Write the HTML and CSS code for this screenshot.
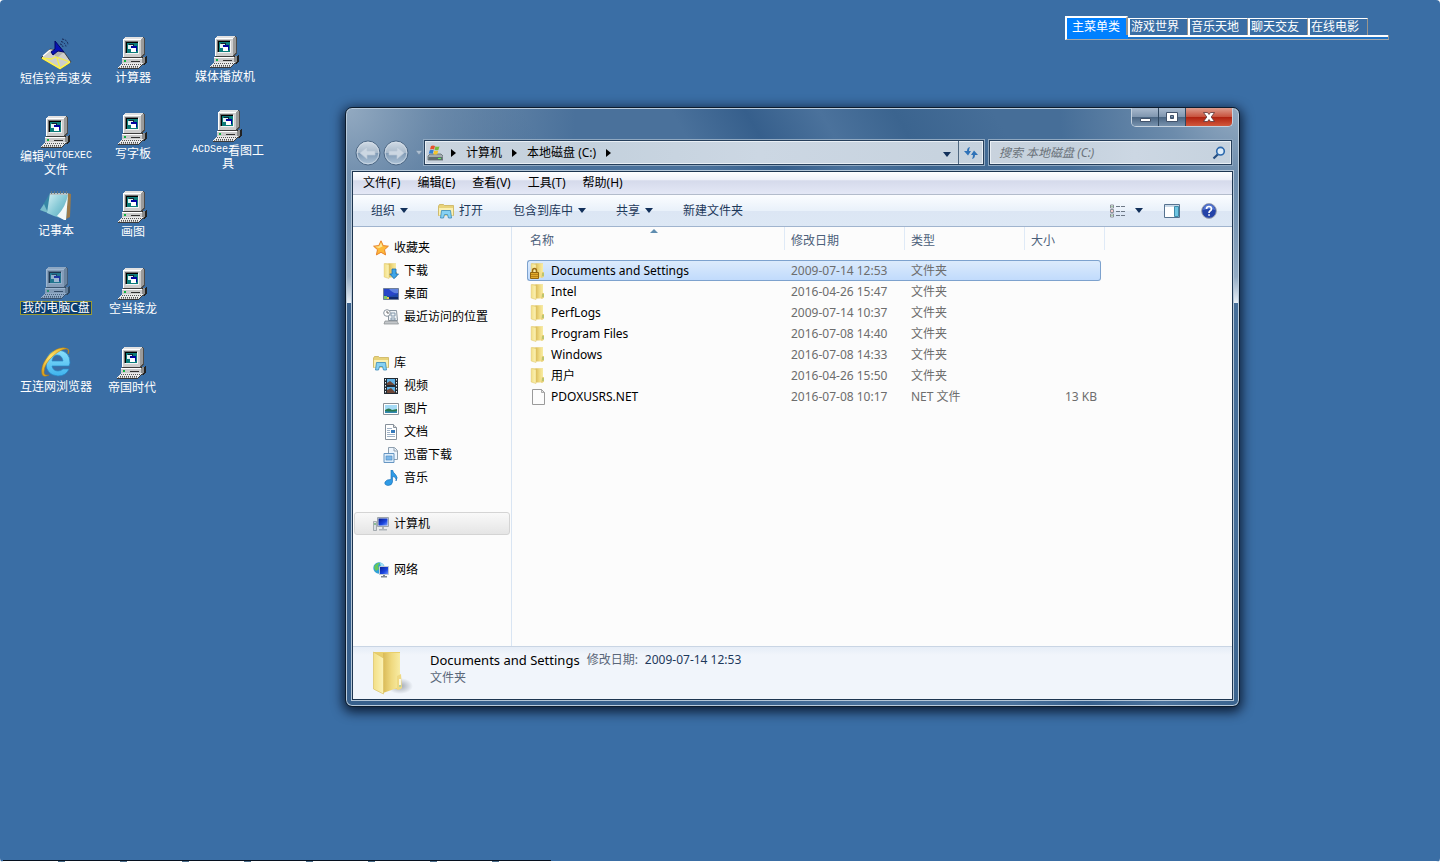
FILE: index.html
```html
<!DOCTYPE html>
<html lang="zh-CN">
<head>
<meta charset="utf-8">
<title>本地磁盘 (C:)</title>
<link rel="stylesheet" href="styles.css">
</head>
<body>
<svg class="defs" width="0" height="0" aria-hidden="true">
  <defs>
    <linearGradient id="gFold" x1="0" x2="1"><stop offset="0" stop-color="#d9ba58"/><stop offset=".5" stop-color="#efd97f"/><stop offset="1" stop-color="#f8ecA4"/></linearGradient>
    <linearGradient id="gFlap" x1="0" x2="1"><stop offset="0" stop-color="#f3df86"/><stop offset="1" stop-color="#fbf3b8"/></linearGradient>
    <radialGradient id="gShade"><stop offset="0" stop-color="#5d6673" stop-opacity=".55"/><stop offset="1" stop-color="#5d6673" stop-opacity="0"/></radialGradient>
    <linearGradient id="gOrb" x1="0" x2="0" y1="0" y2="1"><stop offset="0" stop-color="#d3dde7"/><stop offset=".48" stop-color="#a9bacb"/><stop offset=".5" stop-color="#809ab5"/><stop offset="1" stop-color="#afc4d8"/></linearGradient>
    <linearGradient id="gBlue" x1="0" x2="1" y1="0" y2="1"><stop offset="0" stop-color="#061a8c"/><stop offset=".6" stop-color="#1c46e0"/><stop offset="1" stop-color="#7fa2ff"/></linearGradient>
    <linearGradient id="gNote" x1="0" x2="1" y1="0" y2="1"><stop offset="0" stop-color="#d6f2f5"/><stop offset=".5" stop-color="#86c9d6"/><stop offset="1" stop-color="#4fa3b8"/></linearGradient>
    <linearGradient id="gIe" x1="0" x2="0" y1="0" y2="1"><stop offset="0" stop-color="#8be0fb"/><stop offset="1" stop-color="#3fb4ee"/></linearGradient>
    <linearGradient id="gGold" x1="0" x2="1" y1="1" y2="0"><stop offset="0" stop-color="#d99a12"/><stop offset=".5" stop-color="#ffe36a"/><stop offset="1" stop-color="#e0a518"/></linearGradient>
  </defs>
  <symbol id="pc" viewBox="0 0 32 32">
    <g shape-rendering="crispEdges">
      <path d="M8 0h19v1h1v17h-1v1h-1v1h-1v1H6V2h1V1h1z" fill="#4a4a4a"/>
      <path d="M8 0h18v1h1v16h-1v1h-1v1h-1v1H6V2h1V1h1z" fill="#9a9a9a"/>
      <path d="M8 0h18v1H8zM7 1h18v1H7z" fill="#e2e2e2"/>
      <path d="M6 2h18v18H6z" fill="#cdcdcd"/>
      <path d="M6 2h18v1H7v17H6z" fill="#fff"/>
      <path d="M9 5h13v12H9z" fill="#f4f4f4"/>
      <path d="M8 4h13v12H8z" fill="#707070"/>
      <path d="M9 5h12v11H9z" fill="#000"/>
      <path d="M10 6h11v10H10z" fill="#0c7c7a"/>
      <path d="M12 7h5v5h-5z" fill="#123"/><path d="M11 8h5v4h-5z" fill="#e4f4f4"/>
      <path d="M14 9h6v5h-6z" fill="#0000a0"/><path d="M14 11h5v4h-5z" fill="#fff"/>
      <path d="M7 20h17v1H7z" fill="#3c3c3c"/>
      <path d="M25 20h4v-1h1v7h-1v1h-1v1h-3z" fill="#222"/>
      <path d="M5 21h20v6H5z" fill="#cbcbcb"/><path d="M5 21h20v1H5z" fill="#fff"/>
      <path d="M25 21h1v-1h2v6h-1v1h-2z" fill="#8b8b8b"/>
      <path d="M7 23h2v2H7z" fill="#10b040"/><path d="M14 24h9v1h-9z" fill="#303030"/>
      <path d="M5 26h21v1h-1v1h-1v1h-1v1h-1v1H1v-1h1v-1h1v-1h1v-1h1z" fill="#e9e9e9"/>
      <path d="M1 31h21v1H1zM22 30h1v1h-1zM23 29h1v1h-1zM24 28h1v1h-1zM25 27h2v1h-2z" fill="#3a3a3a"/>
    </g>
    <path d="M5 27.500h19M4 29.500h18" stroke="#555" stroke-dasharray="1 1"/><path d="M2 30.500h19" stroke="#888" stroke-dasharray="1 1"/>
  </symbol>
  <symbol id="mail" viewBox="0 0 32 32">
    <path d="M1 20l9-9 14 3 7 10-11 7z" fill="#cfcfca" stroke="#2a2a2a" stroke-width=".8"/>
    <path d="M10 11l14 3-7 6z" fill="#b2b2ac"/>
    <path d="M2 20l9 1 5-2 14 5M17 20l3 10" fill="none" stroke="#f4ef4a" stroke-width="1.300"/>
    <path d="M2 20l18 10.500L30 24" fill="none" stroke="#fff34a" stroke-width="1.600"/>
    <path d="M3 18l7-6M12 13l5 1" stroke="#fff" stroke-width="1.300"/>
    <path d="M15 3l9 11-6-1-5 4-2-3 4-3z" fill="#0712b4" stroke="#030764"/>
    <path d="M20 6q2 0 3 3M21 3.500q4 1 5 5M22 1q6 1 6 6" fill="none" stroke="#172754" stroke-dasharray="2 1"/>
  </symbol>
  <symbol id="notepad" viewBox="0 0 32 32">
    <path d="M27 3l4 1-1 23-4 2z" fill="#9b7a4a"/>
    <path d="M10 3L0 20l8 3z" fill="#3787a5"/><path d="M4 14l-4 6 8 3z" fill="#79bccb"/>
    <path d="M10 3h18l-2 27-12-4-7-3z" fill="url(#gNote)"/>
    <path d="M28 4q-2 13-11 22l7 4h2z" fill="#f2f8f8"/>
    <path d="M10 3h18v2H10z" fill="#b8c4c6"/>
    <path d="M11.500 1v3M14.500 1v3M17.500 1v3M20.500 1v3M23.500 1v3M26.500 1v3" stroke="#66797f"/>
  </symbol>
  <symbol id="ie" viewBox="0 0 32 32">
    <path d="M29 20H12q1 5 6 5 3 0 5-2h6q-3 7-11 7Q6 29 6 17 7 5 18 4q12 1 12 13zM12 15h11q-1-6-6-6-4 0-5 6z" fill="url(#gIe)" stroke="#2586c6" stroke-width=".7" fill-rule="evenodd"/>
    <path d="M28 3Q20-1 10 8 0 19 2 28q1 4 7 1-5 1-5-3 0-8 9-16 9-8 14-7 2 1 1 5 2-3 0-5z" fill="url(#gGold)" stroke="#b47a0d" stroke-width=".5"/>
  </symbol>
  <symbol id="folder" viewBox="0 0 16 16">
    <path d="M2 .500h11v13.500H6z" fill="#e3c967"/>
    <path d="M5.500.500H13v14H6z" fill="url(#gFold)"/>
    <path d="M1.200.500l4.800 1v14l-4.800-1.500z" fill="url(#gFlap)" stroke="#dcc263" stroke-width=".5"/>
    <path d="M12 9h2v4.500q-1 1.500-3 1z" fill="#e6cf78"/><path d="M13 10v3" stroke="#7fb660" stroke-width=".8"/>
  </symbol>
  <symbol id="library" viewBox="0 0 16 16">
    <path d="M.5 3l1-1.500h4l1 1H15.500v10H.5z" fill="#e8d37a" stroke="#c5aa4d" stroke-width=".7"/>
    <path d="M1 5h14v7.500H1z" fill="#faf0b2"/>
    <path d="M2.500 15l1-7.500h9l1 7.500h-3l-1-3.500h-3l-1 3.500z" fill="#86d1f4" stroke="#3888b5" stroke-width=".8"/>
  </symbol>
  <symbol id="star" viewBox="0 0 16 16"><path d="M8 .8l2.200 4.800 5.200.6-3.900 3.500 1.100 5.200L8 12.300l-4.600 2.600 1.100-5.200L.6 6.200l5.200-.6z" fill="#fdb93a" stroke="#e8832a"/><path d="M8 2.500l1.500 4L6 8l-4-1.300 4.300-.5z" fill="#ffe896"/></symbol>
  <symbol id="download" viewBox="0 0 16 16"><use href="#folder"/><path d="M9 6h4v5h2.500L11 15.700 6.800 11H9z" fill="#3fa6e8" stroke="#1b69ae" stroke-width=".8"/></symbol>
  <symbol id="desk" viewBox="0 0 16 16"><path d="M.5 2.500h15v11H.5z" fill="#1d49a8" stroke="#6f7f99"/><path d="M1 3h14v4Q8 12 1 9z" fill="#2746c9"/><path d="M6 3h9v4Q10 8 6 3z" fill="#5f83e0"/><path d="M1 11h14v2H1z" fill="#102a6a"/><path d="M1 10h3v3H1z" fill="#7cc667"/><path d="M4 11h2v2H4z" fill="#ecc94f"/></symbol>
  <symbol id="recent" viewBox="0 0 16 16"><path d="M5.500 1.500h8l1 10h-9z" fill="#eef2f5" stroke="#8a959f"/><path d="M8 4h4v3H8zM8 9h4v2H8z" fill="none" stroke="#8297aa"/><path d="M2 12h12l1.500 3H1z" fill="#c3c7ca" stroke="#84898d" stroke-width=".7"/><circle cx="4" cy="4" r="3.300" fill="#fff" stroke="#8a959f"/><path d="M4 2v2h2" fill="none" stroke="#666"/></symbol>
  <symbol id="video" viewBox="0 0 16 16"><path d="M1 0h14v16H1z" fill="#222b33"/><path d="M4 1h8v6H4zM4 9h8v6H4z" fill="#5fb0e4"/><path d="M4 5l3-2 5 4H4zM4 12l4-2 4 4v1H4z" fill="#6d4637"/><path d="M2.500 1v15M13.500 1v15" stroke="#e8eef2" stroke-dasharray="1.500 1.500"/></symbol>
  <symbol id="picture" viewBox="0 0 16 16"><path d="M.5 2.500h15v11H.5z" fill="#fff" stroke="#8b9299"/><path d="M2 4h12v8H2z" fill="#a5daf5"/><path d="M2 9q4-3 7 0l5-1v4H2z" fill="#28784f"/><path d="M2 10q7 1 12 0v2H2z" fill="#3288b0"/></symbol>
  <symbol id="doc" viewBox="0 0 16 16"><path d="M2.500.5h8l3 3v12h-11z" fill="#fff" stroke="#86909a"/><path d="M10.500.5v3h3" fill="#ddd" stroke="#86909a"/><path d="M4 4.500h5M4 6.500h3M4 8.500h3M4 10.500h8M4 12.500h8" stroke="#9fb2c6"/><path d="M8 6h4v3H8z" fill="#3479bb"/></symbol>
  <symbol id="thunder" viewBox="0 0 16 16"><path d="M5.500.5h6l3 3v9h-9z" fill="#edf5fd" stroke="#8f9fae"/><path d="M11 1v3h3" fill="none" stroke="#8f9fae"/><path d="M1 6.500h10v9H1z" fill="#dcecfa" stroke="#6796c2"/><path d="M3 9h6v4H3z" fill="#7db8ea" stroke="#4c87bd" stroke-width=".6"/></symbol>
  <symbol id="music" viewBox="0 0 16 16"><path d="M8 0h1.500q.5 2.500 3 4.500 3 3 .5 6.500.5-4-3.500-4.500V12q-.5 3.500-4.500 3.500-4-.5-3-3.500 1.500-2.800 6-2.500z" fill="#2f9be6" stroke="#186cb4" stroke-width=".6"/></symbol>
  <symbol id="computer" viewBox="0 0 16 16"><path d="M.5 5.500h3v9h-3z" fill="#d9dee2" stroke="#8b9298" stroke-width=".7"/><path d="M1 8h2" stroke="#3b9a49"/><path d="M4.500 1.500h11v9h-11z" fill="#d8dde2" stroke="#9da5ac"/><path d="M5.500 2.500h9v7h-9z" fill="url(#gBlue)"/><path d="M9 11h2v2h3v1.500H6V13h3z" fill="#aeb4b9"/></symbol>
  <symbol id="network" viewBox="0 0 16 16"><circle cx="6" cy="6" r="5.700" fill="#2f9fd8"/><path d="M2 3q3-3 5-2L5 4l1 3-3 2q-3-3-1-6z" fill="#67c75a"/><path d="M7 1q4 0 4 4H8z" fill="#a5e2f6"/><path d="M6.500 4.500h9v8h-9z" fill="url(#gBlue)" stroke="#c1c9d4"/><path d="M10 13h2v1h2v1.500H8V14h2z" fill="#7d8790"/></symbol>
  <symbol id="lock" viewBox="0 0 16 16"><use href="#folder"/><path d="M2.500 10V8q0-2.500 2-2.500t2 2.500v2" fill="none" stroke="#9a6b14" stroke-width="1.400"/><path d="M.5 9.500h8v6h-8z" fill="#e2ab2c" stroke="#94660f"/><path d="M1 11.500h7M1 13.500h7" stroke="#b98218"/></symbol>
  <symbol id="file" viewBox="0 0 16 16"><path d="M2.500.5h9l3 3v12h-12z" fill="#fcfcfc" stroke="#9a9a9a"/><path d="M11.500.5v3h3z" fill="#e3e3e3" stroke="#9a9a9a" stroke-width=".8"/></symbol>
  <symbol id="drive" viewBox="0 0 16 16"><path d="M1 11l2-2h11l2 2v4H1z" fill="#a4acb0" stroke="#555e63" stroke-width=".7"/><path d="M1.500 12h14v3h-14z" fill="#5f6c70"/><path d="M11 13.500h3" stroke="#5ff05a"/><path d="M4 1q2-1 4 0L7 4.500q-2-1-4 0z" fill="#e8502c"/><path d="M8.500 1.300q2 1 4 0l-1 3.500q-2 1-4 0z" fill="#79bb3c"/><path d="M2.700 5.200q2-1 4 0l-1 3.500q-2-1-4 0z" fill="#347fd2"/><path d="M7.300 5.500q2 1 4 0l-1 3.500q-2 1-4 0z" fill="#f4c52d"/></symbol>
</svg>

<div class="desktop">
  <nav class="icons" aria-label="桌面">
    <button class="shortcut s1"><svg><use href="#mail"/></svg><span>短信铃声速发</span></button>
    <button class="shortcut s2"><svg><use href="#pc"/></svg><span>计算器</span></button>
    <button class="shortcut s3"><svg><use href="#pc"/></svg><span>媒体播放机</span></button>
    <button class="shortcut s4"><svg><use href="#pc"/></svg><span>编辑<code>AUTOEXEC</code>文件</span></button>
    <button class="shortcut s5"><svg><use href="#pc"/></svg><span>写字板</span></button>
    <button class="shortcut s6"><svg><use href="#pc"/></svg><span><code>ACDSee</code>看图工具</span></button>
    <button class="shortcut s7"><svg><use href="#notepad"/></svg><span>记事本</span></button>
    <button class="shortcut s8"><svg><use href="#pc"/></svg><span>画图</span></button>
    <button class="shortcut s9 selected"><svg><use href="#pc"/></svg><span>我的电脑C盘</span></button>
    <button class="shortcut s10"><svg><use href="#pc"/></svg><span>空当接龙</span></button>
    <button class="shortcut s11"><svg><use href="#ie"/></svg><span>互连网浏览器</span></button>
    <button class="shortcut s12"><svg><use href="#pc"/></svg><span>帝国时代</span></button>
  </nav>

  <div class="tabs">
    <div class="tab-row">
      <button class="tab active">主菜单类</button><button class="tab">游戏世界</button><button class="tab">音乐天地</button><button class="tab">聊天交友</button><button class="tab">在线电影</button>
    </div>
    <div class="tab-strip"></div>
  </div>

  <section class="window">
    <header class="titlebar">
      <div class="caption">
        <button class="cap min" aria-label="最小化"><svg width="14" height="12" viewBox="0 0 14 12"><path d="M2.500 7.500h10v3h-10z" fill="#fff" stroke="#41526b"/></svg></button>
        <button class="cap max" aria-label="最大化"><svg width="14" height="12" viewBox="0 0 14 12"><path d="M1.500 1.500h11v9h-11zM5.500 4.500v3h3v-3z" fill="#fff" stroke="#41526b" fill-rule="evenodd"/></svg></button>
        <button class="cap close" aria-label="关闭"><svg width="14" height="12" viewBox="0 0 14 12"><path d="M1.500 1.500h4L7 3.500l1.500-2h4L9.200 6l3.300 4.500h-4L7 8.500l-1.500 2h-4L4.800 6z" fill="#fff" stroke="#5a3436" stroke-width=".8"/></svg></button>
      </div>
    </header>
    <div class="navbar">
      <button class="orb" aria-label="后退"><svg width="26" height="26" viewBox="0 0 26 26"><circle cx="13" cy="13" r="12" fill="url(#gOrb)" stroke="#4c6784"/><circle cx="13" cy="13" r="10.800" fill="none" stroke="#d5e0ea" stroke-opacity=".7"/><path d="M5 13l7-6v4h8v4h-8v4z" fill="#ccd7e2" stroke="#b7c6d5" stroke-width=".7"/></svg></button>
      <button class="orb" aria-label="前进"><svg width="26" height="26" viewBox="0 0 26 26"><circle cx="13" cy="13" r="12" fill="url(#gOrb)" stroke="#4c6784"/><circle cx="13" cy="13" r="10.800" fill="none" stroke="#d5e0ea" stroke-opacity=".7"/><path d="M21 13l-7-6v4H6v4h8v4z" fill="#ccd7e2" stroke="#b7c6d5" stroke-width=".7"/></svg></button>
      <button class="history" aria-label="最近的页面"><svg width="8" height="6" viewBox="0 0 8 6"><path d="M.5.500h7L4 5z" fill="#aebfd1" stroke="#6a84a0" stroke-width=".6"/></svg></button>
      <div class="address">
        <svg class="i16 drive"><use href="#drive"/></svg>
        <i class="right"></i><button class="crumb">计算机</button>
        <i class="right"></i><button class="crumb">本地磁盘 (C:)</button>
        <i class="right"></i>
        <button class="drop" aria-label="以前的位置"><i class="down"></i></button>
        <button class="refresh" aria-label="刷新"><svg width="16" height="14" viewBox="0 0 16 14"><path d="M7 1Q4 1.500 4 5H1l4 4.500L8 5H6q0-2 1-4z" fill="#2f72b8"/><path d="M9 13q3-.5 3-4h3l-4-4.500L8 9h2q0 2-1 4z" fill="#2f72b8"/></svg></button>
      </div>
      <label class="search"><input type="search" placeholder="搜索 本地磁盘 (C:)" aria-label="搜索 本地磁盘 (C:)"><svg width="14" height="14" viewBox="0 0 14 14"><path d="M6.200 8L1.500 12.500" stroke="#254d80" stroke-width="2.200"/><circle cx="8.500" cy="5.200" r="3.800" fill="#dcebf8" stroke="#2b68ad" stroke-width="1.600"/></svg></label>
    </div>

    <div class="client">
      <div class="menubar">
        <button>文件(F)</button><button>编辑(E)</button><button>查看(V)</button><button>工具(T)</button><button>帮助(H)</button>
      </div>
      <div class="toolbar">
        <button>组织<i class="down"></i></button>
        <button><svg class="i16"><use href="#library"/></svg>打开</button>
        <button>包含到库中<i class="down"></i></button>
        <button>共享<i class="down"></i></button>
        <button>新建文件夹</button>
        <div class="tools">
          <button aria-label="更改视图"><svg width="16" height="14" viewBox="0 0 16 14"><path d="M.5 1h3v3h-3zM.5 5.500h3v3h-3zM.5 10h3v3h-3z" fill="#fff" stroke="#8a8f98"/><path d="M1.500 2.500h1M1.500 11.500h1" stroke="#3a9a4a"/><path d="M1.500 7h1" stroke="#c33"/><path d="M6 2.500h4M11 2.500h4M6 7.500h4M11 7.500h4M6 11.500h4M11 11.500h4" stroke="#6d7886"/></svg></button>
          <button class="gap" aria-label="更多选项"><i class="down"></i></button>
          <button class="gap" aria-label="预览窗格"><svg width="16" height="14" viewBox="0 0 16 14"><path d="M.5.500h15v13H.5z" fill="#fff" stroke="#56728f"/><path d="M1 1h14v2H1z" fill="#c9d9e8"/><path d="M10.500 2.500h4v10h-4z" fill="#6fc5e2" stroke="#3f8aa8"/></svg></button>
          <button class="gap" aria-label="帮助"><svg width="16" height="16" viewBox="0 0 16 16"><circle cx="8" cy="8" r="7.400" fill="#2443a8" stroke="#a3a8b2"/><path d="M2 7a6 6 0 0112 0Q8 5 2 7z" fill="#5375d0"/><path d="M5.500 6q0-2.500 2.500-2.500T10.500 6Q10.500 7 9 8q-1 .7-1 2" fill="none" stroke="#fff" stroke-width="1.700"/><path d="M7.200 11.200h1.700v1.600H7.200z" fill="#fff"/></svg></button>
        </div>
      </div>
      <div class="panes">
        <ul class="tree">
          <li><svg class="i16"><use href="#star"/></svg>收藏夹</li>
          <li class="sub"><svg class="i16"><use href="#download"/></svg>下载</li>
          <li class="sub"><svg class="i16"><use href="#desk"/></svg>桌面</li>
          <li class="sub last"><svg class="i16"><use href="#recent"/></svg>最近访问的位置</li>
          <li><svg class="i16"><use href="#library"/></svg>库</li>
          <li class="sub"><svg class="i16"><use href="#video"/></svg>视频</li>
          <li class="sub"><svg class="i16"><use href="#picture"/></svg>图片</li>
          <li class="sub"><svg class="i16"><use href="#doc"/></svg>文档</li>
          <li class="sub"><svg class="i16"><use href="#thunder"/></svg>迅雷下载</li>
          <li class="sub last"><svg class="i16"><use href="#music"/></svg>音乐</li>
          <li class="last current"><svg class="i16"><use href="#computer"/></svg>计算机</li>
          <li><svg class="i16"><use href="#network"/></svg>网络</li>
        </ul>
        <div class="list">
          <table>
            <colgroup><col class="c-name"><col class="c-date"><col class="c-date"><col class="c-size"></colgroup>
            <thead><tr><th class="sorted">名称</th><th>修改日期</th><th>类型</th><th>大小</th></tr></thead>
            <tbody>
              <tr class="picked"><td><svg class="i16"><use href="#lock"/></svg>Documents and Settings</td><td>2009-07-14 12:53</td><td>文件夹</td><td></td></tr>
              <tr><td><svg class="i16"><use href="#folder"/></svg>Intel</td><td>2016-04-26 15:47</td><td>文件夹</td><td></td></tr>
              <tr><td><svg class="i16"><use href="#folder"/></svg>PerfLogs</td><td>2009-07-14 10:37</td><td>文件夹</td><td></td></tr>
              <tr><td><svg class="i16"><use href="#folder"/></svg>Program Files</td><td>2016-07-08 14:40</td><td>文件夹</td><td></td></tr>
              <tr><td><svg class="i16"><use href="#folder"/></svg>Windows</td><td>2016-07-08 14:33</td><td>文件夹</td><td></td></tr>
              <tr><td><svg class="i16"><use href="#folder"/></svg>用户</td><td>2016-04-26 15:50</td><td>文件夹</td><td></td></tr>
              <tr><td><svg class="i16"><use href="#file"/></svg>PDOXUSRS.NET</td><td>2016-07-08 10:17</td><td>NET 文件</td><td>13 KB</td></tr>
            </tbody>
          </table>
        </div>
      </div>
      <footer class="details">
        <svg class="bigfolder" viewBox="0 0 42 44"><ellipse cx="28" cy="35" rx="13" ry="8" fill="url(#gShade)"/><path d="M2 1h26v37H11z" fill="#e9cf6c"/><path d="M11 2h17v34l-17 6z" fill="url(#gFold)"/><path d="M25 25l4-2 1 14q-2 2-5 2z" fill="#efd983"/><path d="M28 28v8" stroke="#fff" stroke-width="1.500"/><path d="M28 34v2" stroke="#6fae62"/><path d="M1.500 1l10 6v36l-10-5z" fill="url(#gFlap)" stroke="#dcc163" stroke-width=".7"/></svg>
        <div class="info">
          <p><strong>Documents and Settings</strong><span class="key">修改日期:</span><span class="val">2009-07-14 12:53</span></p>
          <p class="key">文件夹</p>
        </div>
      </footer>
    </div>
  </section>
  <div class="edge"></div>
</div>
</body>
</html>
```
FILE: styles.css
```css
* { box-sizing: border-box; }

body {
  margin: 0;
  background: #fff;
  font: 12px/16px "Noto Sans", "Noto Sans CJK SC", sans-serif;
  color: #000;
}

button, input {
  margin: 0;
  padding: 0;
  border: 0;
  background: none;
  font: inherit;
  color: inherit;
  white-space: nowrap;
}

button { flex: none; }
ul, p { margin: 0; padding: 0; list-style: none; }
svg { display: block; flex: none; }
.defs { position: absolute; }
.i16 { width: 16px; height: 16px; }

.desktop {
  position: relative;
  min-height: 100vh;
  overflow: hidden;
  border-radius: 4px;
  background: #3a6ea5;
}

/* Desktop shortcuts */
.shortcut {
  position: absolute;
  display: flex;
  flex-direction: column;
  align-items: center;
  gap: 2px;
  width: 76px;
  color: #fff;
  line-height: 13px;
  text-align: center;
  white-space: normal;
  word-break: break-all;
}
.shortcut svg { width: 32px; height: 32px; }
.shortcut code { font: 10px/12px "Liberation Mono", monospace; vertical-align: top; }
.shortcut.selected svg { opacity: 0.5; }
.shortcut.selected span {
  width: 72px;
  height: 14px;
  border: 1px solid #9a9a34;
  background: #0a3c6e;
  line-height: 12px;
}
.s1 { left: 18px; top: 38px; }
.s2 { left: 95px; top: 37px; }
.s3 { left: 187px; top: 36px; }
.s4 { left: 18px; top: 116px; }
.s5 { left: 95px; top: 113px; }
.s6 { left: 190px; top: 110px; }
.s7 { left: 18px; top: 190px; }
.s8 { left: 95px; top: 191px; }
.s9 { left: 18px; top: 267px; }
.s10 { left: 95px; top: 268px; }
.s11 { left: 18px; top: 346px; }
.s12 { left: 94px; top: 347px; }

/* Category tabs */
.tabs {
  position: absolute;
  top: 16px;
  right: 51px;
  width: 324px;
  color: #fff;
}
.tab-row { display: flex; align-items: flex-end; }
.tab {
  width: 60px;
  height: 17px;
  padding-left: 1px;
  border: 1px solid #fff;
  border-width: 1px 1px 0 2px;
  border-right-color: #9a958c;
  line-height: 16px;
  text-align: left;
}
.tab.active {
  width: 63px;
  height: 19px;
  padding-left: 5px;
  border-width: 2px 2px 0 2px;
  background: #0080ff;
}
.tab-strip {
  height: 5px;
  border-left: 2px solid #fff;
  border-right: 1px solid #9a958c;
  border-bottom: 1px solid #a8a8a8;
  background: linear-gradient(#0080ff, #0080ff) 0 0 / 61px 4px no-repeat, linear-gradient(#fff 2px, #2173c4 2px);
}

/* Explorer window */
.window {
  position: absolute;
  top: 107px;
  left: 345px;
  right: 200px;
  padding: 0 6px 6px;
  border: 1px solid #0c1c2e;
  border-radius: 7px;
  background:
    linear-gradient(#a9bccf00, #b8c8d8aa 80%, #e8eff6 100%) 0 64px / 6px 131px no-repeat,
    linear-gradient(#a9bccf00, #b8c8d8aa 80%, #e8eff6 100%) 100% 64px / 6px 131px no-repeat,
    radial-gradient(circle at 0 0, #93aac1 0, #7f9ab5aa 90px, #7f9ab500 230px) 0 0 / 100% 195px no-repeat,
    radial-gradient(circle at 100% 0, #93aac1 0, #7f9ab5aa 70px, #7f9ab500 180px) 0 0 / 100% 195px no-repeat,
    linear-gradient(60deg, #38608c 30%, #4a719b 42%, #4a719b 54%, #365f8c 60%, #4b729c 66%, #3b648f 72%, #466e98 80%) #3e668f;
  box-shadow: inset 0 0 0 1px #b9cbdc, 0 3px 12px 2px rgba(0, 8, 24, 0.8);
}

.titlebar { display: flex; justify-content: flex-end; height: 30px; }
.caption {
  display: flex;
  height: 19px;
  border: 1px solid #c5d2df;
  border-top: 0;
  border-radius: 0 0 5px 5px;
  overflow: hidden;
}
.cap {
  display: flex;
  align-items: center;
  justify-content: center;
  width: 27px;
  border-right: 1px solid #30475f;
  background: linear-gradient(#a9bace, #8197b0 48%, #4b6683 52%, #7792ae);
}
.cap.close {
  width: 46px;
  border-right: 0;
  background: linear-gradient(#dd9c8d, #c8543f 48%, #b02311 52%, #d2583c);
}

.navbar { display: flex; align-items: center; height: 29px; margin-bottom: 4px; padding: 0 1px 0 3px; }
.orb { width: 28px; }
.history { width: 13px; padding-left: 4px; }
.address, .search {
  display: flex;
  align-items: center;
  height: 25px;
  border: 1px solid #263f5b;
  outline: 1px solid #8fa8c1;
  box-shadow: inset 0 0 0 1px #e9eff5;
  background: linear-gradient(90deg, #c9d3de, #c4d1dd 30%, #ccd7e3 60%, #c6d2de);
}
.address { flex: 1; }
.drive { margin: 0 8px 0 2px; }
.address .right { margin-right: 10px; }
.crumb { margin-right: 10px; }
.drop { margin-left: auto; padding: 0 7px; }
.refresh { height: 23px; padding: 0 4px; border-left: 1px solid #4f6780; }
.search { width: 243px; margin-left: 5px; padding-right: 5px; }
.search input { flex: 1; min-width: 0; padding-left: 9px; outline: 0; }
.search input::placeholder { color: #6b737b; font-style: italic; opacity: 1; }

.right, .down { display: inline-block; flex: none; width: 0; height: 0; border: 4px solid transparent; }
.right { border-width: 4px 0 4px 5px; border-left-color: #000; }
.down { border-width: 5px 4px 0; border-top-color: #12305a; }

.client { border: 1px solid #1d3550; outline: 1px solid #b5c7d8; background: #fcfcfc; }

.menubar {
  display: flex;
  gap: 17px;
  height: 23px;
  padding-left: 10px;
  border-bottom: 1px solid #b3bccb;
  background: linear-gradient(#fff, #eff1f9 35%, #d5daeb 40%, #e4e8f6);
}

.toolbar {
  display: flex;
  align-items: center;
  height: 32px;
  padding: 0 15px 0 18px;
  border-bottom: 1px solid #a0b4ce;
  background: linear-gradient(#fbfdff, #e9f1fa 50%, #dce6f4 52%, #dde8f5);
  color: #1e395b;
}
.toolbar button { display: flex; align-items: center; gap: 5px; margin-right: 30px; }
.toolbar .tools { display: flex; align-items: center; margin-left: auto; }
.toolbar .tools button { margin-right: 0; }
.toolbar .tools .gap { margin-left: 21px; }
.toolbar .tools .gap:nth-child(2) { margin-left: 9px; }

.panes { display: flex; }
.tree {
  flex: none;
  width: 159px;
  padding: 9px 1px 65px;
  border-right: 1px solid #d9e5f3;
}
.tree li {
  display: flex;
  align-items: center;
  gap: 5px;
  height: 23px;
  padding-left: 19px;
}
.tree .sub { padding-left: 29px; }
.tree .last { margin-bottom: 23px; }
.tree .current {
  padding-left: 18px;
  border: 1px solid #d4d4d4;
  border-radius: 3px;
  background: linear-gradient(#f9f9f9, #e5e5e5);
}

.list { flex: 1; padding-left: 15px; }
table { width: 574px; table-layout: fixed; border-collapse: separate; border-spacing: 0; }
.c-name { width: 257px; }
.c-date { width: 120px; }
.c-size { width: 77px; }
th {
  position: relative;
  height: 33px;
  padding: 0 0 6px 7px;
  font-weight: 400;
  text-align: left;
  color: #4c607a;
  background: linear-gradient(#dfeaf7, #dfeaf7) 0 0 / 1px 23px no-repeat;
}
th.sorted { padding-left: 3px; background: none; }
th.sorted::before {
  content: "";
  position: absolute;
  top: 2px;
  left: 123px;
  border: 4px solid transparent;
  border-width: 0 4px 4px;
  border-bottom-color: #5f8db0;
}
th:last-child::after {
  content: "";
  position: absolute;
  top: 0;
  right: -4px;
  width: 1px;
  height: 23px;
  background: #dfeaf7;
}
td { height: 21px; padding: 0 0 0 7px; color: #6d6d6d; }
td:first-child { display: flex; align-items: center; gap: 5px; padding-left: 3px; color: #000; }
td:last-child { padding-right: 4px; text-align: right; }
.picked td {
  border: 1px solid #7da2ce;
  border-width: 1px 0;
  background: linear-gradient(#dcebfc, #c1dbfc);
}
.picked td:first-child { padding-left: 2px; border-left-width: 1px; border-radius: 3px 0 0 3px; }
.picked td:last-child { border-right-width: 1px; border-radius: 0 3px 3px 0; }

.details {
  display: flex;
  gap: 16px;
  height: 53px;
  padding: 4px 19px 0;
  border-top: 1px solid #c9d5e4;
  background: linear-gradient(#e6edf7, #f1f5fb 8px);
  color: #1e395b;
}
.bigfolder { width: 42px; height: 44px; }
.info p { display: flex; gap: 7px; line-height: 18px; }
.info strong { font-size: 13px; font-weight: 400; color: #000; }
.key { color: #5a6779; }

/* Bottom edge of the screen */
.edge {
  position: absolute;
  left: 0;
  bottom: 0;
  width: 100%;
  height: 2px;
  border-top: 1px solid #3a6ea5;
  background: #fff;
}
.edge::before {
  content: "";
  position: absolute;
  top: -1px;
  left: 3px;
  width: 548px;
  height: 2px;
  border-top: 1px solid #06111f;
  background: repeating-linear-gradient(90deg, #fff 0 55px, #4d6f8c 55px 62px);
}
```
